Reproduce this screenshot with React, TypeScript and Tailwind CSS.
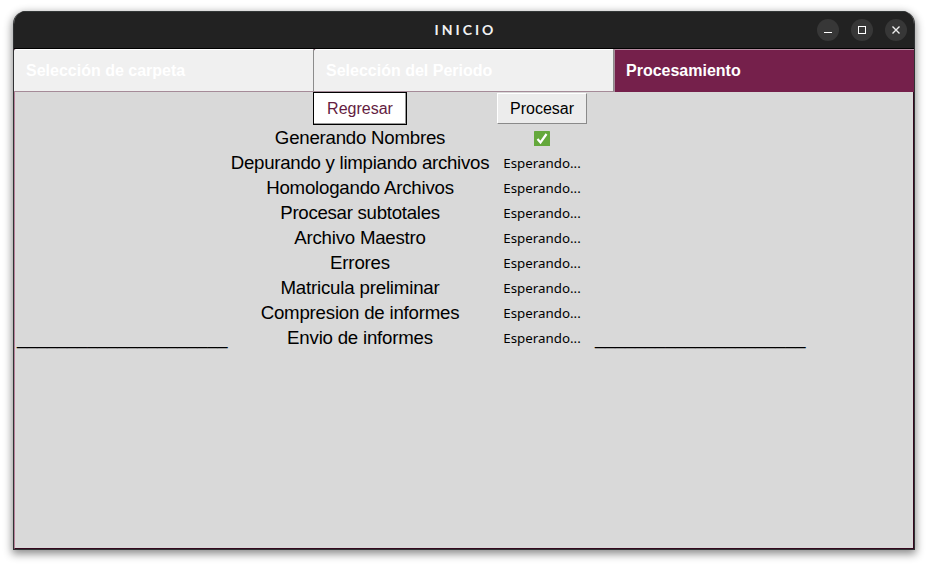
import React from "react";

const steps = [
  { name: "Generando Nombres", tracking: "tracking-[-0.23px]", done: true },
  { name: "Depurando y limpiando archivos", tracking: "tracking-[-0.27px]", done: false },
  { name: "Homologando Archivos", tracking: "tracking-[-0.21px]", done: false },
  { name: "Procesar subtotales", tracking: "tracking-[-0.28px]", done: false },
  { name: "Archivo Maestro", tracking: "tracking-[-0.22px]", done: false },
  { name: "Errores", tracking: "tracking-[-0.2px]", done: false },
  { name: "Matricula preliminar", tracking: "tracking-[-0.18px]", done: false },
  { name: "Compresion de informes", tracking: "tracking-[-0.21px]", done: false },
  { name: "Envio de informes", tracking: "tracking-[-0.21px]", done: false },
];

function TitleBar() {
  const button = "flex size-[22px] items-center justify-center rounded-full bg-[#373737]";
  return (
    <header className="grid h-[38px] shrink-0 grid-cols-[1fr_auto_1fr] items-center border-t border-b border-t-[#343838] border-b-black bg-[#222222]">
      <span />
      <h1 className="pl-[3px] font-['Lato','Noto_Sans',sans-serif] text-[14px] leading-[20px] font-bold tracking-[3px] text-[#f2f2f2]">
        INICIO
      </h1>
      <div className="flex justify-end gap-3 pr-[7px]">
        <span className={button}>
          <svg width="22" height="22"><path d="M7 13.5h8" stroke="#fff" /></svg>
        </span>
        <span className={button}>
          <svg width="22" height="22"><rect x="7.5" y="7.5" width="7" height="7" fill="none" stroke="#fff" /></svg>
        </span>
        <span className={button}>
          <svg width="22" height="22"><path d="M7.5 7.5l7 7M14.5 7.5l-7 7" stroke="#eee" strokeWidth="1.4" /></svg>
        </span>
      </div>
    </header>
  );
}

function Tabs() {
  const idle =
    "flex h-[43px] w-[300px] items-center rounded-tl-[2px] border-t border-r border-b border-t-white border-r-[#8c8c8c] border-b-[#a58b98] bg-[#f0f0f0] pl-3 text-white";
  return (
    <nav className="flex shrink-0 bg-[#4d1430] text-[16px] leading-[20px] font-bold">
      <div className={idle}>Selección de carpeta</div>
      <div className={idle}>Selección del Periodo</div>
      <div className="flex h-[43px] flex-1 items-center border-t border-l border-t-[#b58ba0] border-l-[#a58b98] bg-[#75204b] pl-[11px] text-white">
        Procesamiento
      </div>
    </nav>
  );
}

function Rule() {
  return (
    <span className="block h-[25px] self-end overflow-hidden pl-[2px] text-[18px] leading-[25px] tracking-[0.01px] whitespace-nowrap">
      {"_".repeat(21)}
    </span>
  );
}

export default function App() {
  return (
    <div className="h-[566px] w-[928px] overflow-hidden bg-white pt-[11px] pl-[13px] font-['Liberation_Sans',Arial,sans-serif] text-black">
      <main className="flex h-[539px] w-[902px] flex-col overflow-hidden rounded-t-[13px] border-x border-b border-[#303234] bg-[#d9d9d9] shadow-[0_3px_9px_1px_rgba(0,0,0,0.45)]">
        <TitleBar />
        <Tabs />
        <section className="grid flex-1 grid-cols-[214px_262px_102px_214px] content-start border-r border-b border-l border-r-[#35081f] border-b-[#35081f] border-l-[#b58099]">
          <span />
          <div className="flex h-[33px] justify-center">
            <button className="h-[33px] w-[94px] border border-black bg-white text-[16px] text-[#641c41] shadow-[inset_-1px_-1px_0_#999]">
              Regresar
            </button>
          </div>
          <div className="flex h-[33px] items-center justify-center">
            <button className="h-[31px] w-[90px] border border-t-white border-r-[#8a8a8a] border-b-[#8a8a8a] border-l-white bg-[#ececec] text-[16px]">
              Procesar
            </button>
          </div>
          <span />
          <Rule />
          <div>
            {steps.map((step) => (
              <div key={step.name} className="flex h-[25px] items-center justify-center text-[18.67px] leading-[25px] whitespace-nowrap">
                <span className={step.tracking}>{step.name}</span>
              </div>
            ))}
          </div>
          <div className="pt-px">
            {steps.map((step) => (
              <div key={step.name} className="flex h-[25px] items-center justify-center font-['Noto_Sans',sans-serif] text-[13.33px] leading-[25px]">
                {step.done ? (
                  <svg role="img" aria-label="✅" width="16" height="15" viewBox="0 0 16 15">
                    <rect width="16" height="15" rx="0.6" fill="#64a83b" />
                    <path d="M3.5 8l3 3.5L12.5 3" fill="none" stroke="#fff" strokeWidth="2.2" />
                  </svg>
                ) : (
                  "Esperando..."
                )}
              </div>
            ))}
          </div>
          <Rule />
        </section>
      </main>
    </div>
  );
}
